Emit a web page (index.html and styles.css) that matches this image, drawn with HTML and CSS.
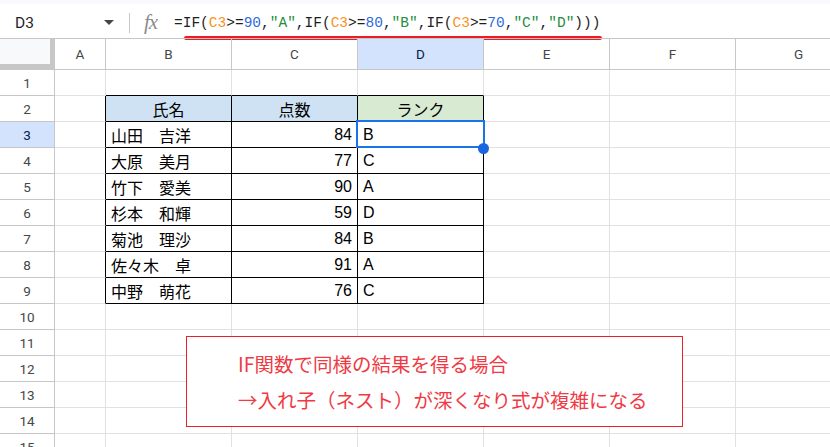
FILE: index.html
```html
<!DOCTYPE html>
<html lang="ja">
<head>
    <meta charset="UTF-8">
    <meta name="viewport" content="width=device-width, initial-scale=1.0">
    <title>IF関数 - ランク</title>
    <link rel="stylesheet" href="styles.css">
</head>
<body>
    <div class="topstrip"></div>
    <div class="formula-bar">
        <div class="name-box">D3</div>
        <div class="name-arrow"></div>
        <div class="divider"></div>
        <div class="fx">fx</div>
        <div class="formula">=<span class="nest">IF(<span class="ref">C3</span>&gt;=<span class="n">90</span>,<span class="s">"A"</span>,IF(<span class="ref">C3</span>&gt;=<span class="n">80</span>,<span class="s">"B"</span>,IF(<span class="ref">C3</span>&gt;=<span class="n">70</span>,<span class="s">"C"</span>,<span class="s">"D"</span>)))</span></div>
    </div>

    <div class="sheet">
        <!-- column headers -->
        <div class="corner"></div>
        <div class="ch">A</div>
        <div class="ch">B</div>
        <div class="ch">C</div>
        <div class="ch sel">D</div>
        <div class="ch">E</div>
        <div class="ch">F</div>
        <div class="ch">G</div>

        <div class="rh">1</div>
        <div class="c"></div>
        <div class="c edge-top"></div><div class="c edge-top"></div><div class="c edge-top"></div>
        <div class="c"></div><div class="c"></div><div class="c"></div>

        <div class="rh">2</div>
        <div class="c edge-left"></div>
        <div class="c tb ctr head-blue">氏名</div>
        <div class="c tb ctr head-blue">点数</div>
        <div class="c tb ctr head-green">ランク</div>
        <div class="c"></div><div class="c"></div><div class="c"></div>

        <div class="rh sel">3</div>
        <div class="c edge-left"></div>
        <div class="c tb">山田　吉洋</div>
        <div class="c tb num">84</div>
        <div class="c tb cur">B<span class="sel-box"></span><span class="handle"></span></div>
        <div class="c"></div><div class="c"></div><div class="c"></div>

        <div class="rh">4</div>
        <div class="c edge-left"></div>
        <div class="c tb">大原　美月</div>
        <div class="c tb num">77</div>
        <div class="c tb">C</div>
        <div class="c"></div><div class="c"></div><div class="c"></div>

        <div class="rh">5</div>
        <div class="c edge-left"></div>
        <div class="c tb">竹下　愛美</div>
        <div class="c tb num">90</div>
        <div class="c tb">A</div>
        <div class="c"></div><div class="c"></div><div class="c"></div>

        <div class="rh">6</div>
        <div class="c edge-left"></div>
        <div class="c tb">杉本　和輝</div>
        <div class="c tb num">59</div>
        <div class="c tb">D</div>
        <div class="c"></div><div class="c"></div><div class="c"></div>

        <div class="rh">7</div>
        <div class="c edge-left"></div>
        <div class="c tb">菊池　理沙</div>
        <div class="c tb num">84</div>
        <div class="c tb">B</div>
        <div class="c"></div><div class="c"></div><div class="c"></div>

        <div class="rh">8</div>
        <div class="c edge-left"></div>
        <div class="c tb">佐々木　卓</div>
        <div class="c tb num">91</div>
        <div class="c tb">A</div>
        <div class="c"></div><div class="c"></div><div class="c"></div>

        <div class="rh">9</div>
        <div class="c edge-left"></div>
        <div class="c tb">中野　萌花</div>
        <div class="c tb num">76</div>
        <div class="c tb">C</div>
        <div class="c"></div><div class="c"></div><div class="c"></div>

        <div class="rh">10</div>
        <div class="c"></div><div class="c"></div><div class="c"></div><div class="c"></div><div class="c"></div><div class="c"></div><div class="c"></div>
        <div class="rh">11</div>
        <div class="c"></div><div class="c"></div><div class="c"></div><div class="c"></div><div class="c"></div><div class="c"></div><div class="c"></div>
        <div class="rh">12</div>
        <div class="c"></div><div class="c"></div><div class="c"></div><div class="c"></div><div class="c"></div><div class="c"></div><div class="c"></div>
        <div class="rh">13</div>
        <div class="c"></div><div class="c"></div><div class="c"></div><div class="c"></div><div class="c"></div><div class="c"></div><div class="c"></div>
        <div class="rh">14</div>
        <div class="c"></div><div class="c"></div><div class="c"></div><div class="c"></div><div class="c"></div><div class="c"></div><div class="c"></div>
        <div class="rh">15</div>
        <div class="c"></div><div class="c"></div><div class="c"></div><div class="c"></div><div class="c"></div><div class="c"></div><div class="c"></div>

        <!-- floating note -->
        <div class="note">
            <p>IF関数で同様の結果を得る場合</p>
            <p>→入れ子（ネスト）が深くなり式が複雑になる</p>
        </div>
    </div>
</body>
</html>
```

FILE: styles.css
```css
* {
    box-sizing: border-box;
}
body {
    margin: 0;
    width: 830px;
    height: 447px;
    overflow: hidden;
    background: #fff;
    font-family: "Liberation Sans", "Noto Sans CJK JP", sans-serif;
    color: #000;
}
.topstrip {
    height: 4px;
    background: #f8fafd;
}
.formula-bar {
    height: 35px;
    padding-top: 2px;
    display: flex;
    align-items: center;
}
.name-box {
    width: 96px;
    padding-left: 15px;
    font-family: Roboto, "Liberation Sans", sans-serif;
    font-size: 15.5px;
    color: #1f1f1f;
}
.name-arrow {
    width: 0;
    height: 0;
    margin-left: 8px;
    border-left: 5px solid transparent;
    border-right: 5px solid transparent;
    border-top: 5px solid #444746;
}
.divider {
    width: 1px;
    height: 20px;
    margin-left: 15px;
    background: #c7c7c7;
}
.fx {
    margin-left: 14px;
    width: 30px;
    font-family: "Liberation Serif", serif;
    font-style: italic;
    font-size: 21px;
    color: #8c8c8c;
    letter-spacing: -1px;
}
.formula {
    font-family: "Liberation Mono", monospace;
    font-size: 14.5px;
    color: #1f1f1f;
}
.nest {
    position: relative;
}
.nest::after {
    content: "";
    position: absolute;
    left: 1px;
    right: -2px;
    top: calc(100% + 5px);
    height: 4px;
    border-radius: 2px;
    background: #ec1c24;
}
.ref { color: #f7941d; }
.n { color: #2f6be0; }
.s { color: #1e8e3e; }

.sheet {
    position: relative;
    display: grid;
    grid-template-columns: 55px 51px repeat(6, 126px);
    grid-template-rows: 31px repeat(15, 26px);
    border-top: 1px solid #c7c7c7;
    margin-top: -1px;
}
.corner {
    background: #f8f9fa;
    border-right: 5px solid #c7c7c7;
    border-bottom: 6px solid #c7c7c7;
}
.ch,
.rh {
    display: flex;
    align-items: center;
    justify-content: center;
    font-family: Roboto, "Liberation Sans", sans-serif;
    font-size: 13.5px;
    color: #444746;
    border-right: 1px solid #c7c7c7;
    border-bottom: 1px solid #c7c7c7;
}
.ch.sel, .rh.sel {
    background: #d3e3fd;
    color: #041e49;
}
.c {
    display: flex;
    align-items: center;
    padding: 0 5px;
    font-size: 16px;
    white-space: nowrap;
    border-right: 1px solid #e1e1e1;
    border-bottom: 1px solid #e1e1e1;
}
.edge-top {
    border-bottom-color: #000;
}
.edge-left {
    border-right-color: #000;
}
.tb {
    border-right-color: #000;
    border-bottom-color: #000;
}
.ctr {
    justify-content: center;
}
.num {
    justify-content: flex-end;
}
.head-blue {
    background: #cfe2f3;
}
.head-green {
    background: #d9ead3;
}
.cur {
    position: relative;
}
.sel-box {
    position: absolute;
    left: -2px;
    top: -2px;
    width: 129px;
    height: 28px;
    border: 2px solid #1a73e8;
}
.handle {
    position: absolute;
    left: 120px;
    top: 21px;
    width: 11px;
    height: 11px;
    border-radius: 50%;
    background: #1a66e0;
}
.note {
    position: absolute;
    left: 186px;
    top: 297px;
    width: 497px;
    height: 91px;
    padding-left: 51px;
    border: 1px solid #e8202b;
    background: #fff;
    display: flex;
    flex-direction: column;
    justify-content: center;
}
.note p {
    margin: 0;
    line-height: 36px;
    font-family: "Noto Sans CJK JP", sans-serif;
    font-size: 19.5px;
    color: #ef3a44;
    white-space: nowrap;
}
```
